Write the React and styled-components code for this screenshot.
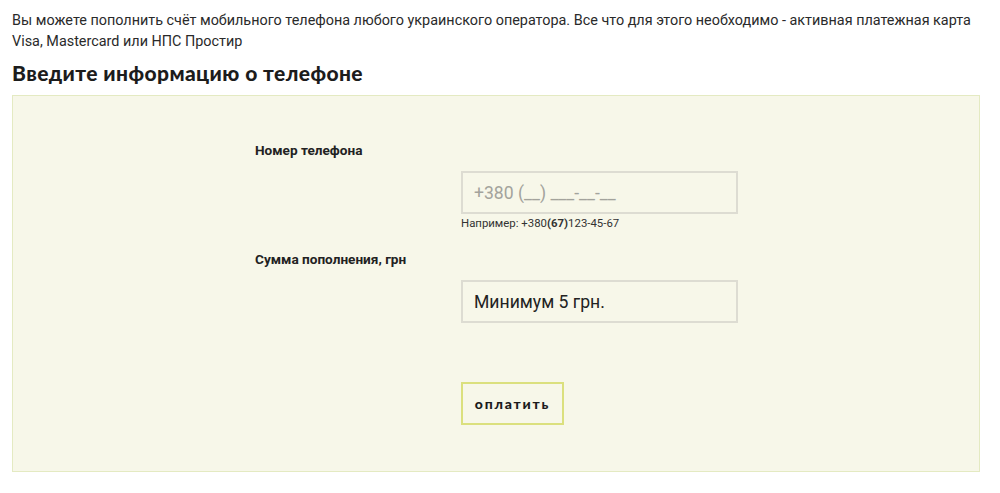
import React from 'react';
import styled, { createGlobalStyle } from 'styled-components';

const GlobalStyle = createGlobalStyle`
  body {
    margin: 0;
    background: #fff;
    font-family: Roboto, "Liberation Sans", sans-serif;
    color: #222;
  }
`;

const StyledWrapper = styled.div`
  padding: 10px 20px 0 12px;
`;

const StyledIntro = styled.p`
  margin: 0;
  font-size: 14.4px;
  line-height: 21px;
  color: #2a2a2a;
`;

const StyledHeading = styled.h2`
  margin: 9px 0 10px;
  font-family: Lato, sans-serif;
  font-weight: 900;
  font-size: 21px;
  letter-spacing: 0.4px;
  line-height: 24px;
  color: #1c1c1c;
`;

const StyledPanel = styled.form`
  box-sizing: border-box;
  width: 968px;
  height: 377px;
  background: #f7f7e9;
  border: 1px solid #e4eac2;
  padding: 44px 0 0 242px;
`;

const StyledField = styled.div`
  display: flex;
  flex-direction: column;
  margin-bottom: ${({ $gap }) => $gap || 0}px;
`;

const StyledLabel = styled.label`
  font-size: 13.6px;
  font-weight: 700;
  line-height: 20px;
  color: #222;
  margin-bottom: 11px;
`;

const StyledControl = styled.div`
  margin-left: 206px;
  display: flex;
  flex-direction: column;
`;

const StyledInput = styled.input`
  box-sizing: border-box;
  width: 277px;
  height: 43px;
  border: 2px solid #dddcd2;
  background: #f7f7e9;
  padding: 0 11px;
  font-family: Roboto, sans-serif;
  font-size: 17.6px;
  color: #222;
  outline: none;

  &::placeholder {
    color: ${({ $dark }) => ($dark ? '#222' : '#a3a39c')};
  }
`;

const StyledHint = styled.span`
  font-size: 11.4px;
  line-height: 16px;
  margin-top: 1px;
  color: #333;

  b {
    font-weight: 700;
  }
`;

const StyledButton = styled.button`
  box-sizing: border-box;
  margin: 59px 0 0 206px;
  width: 103px;
  height: 43px;
  padding: 0;
  background: transparent;
  border: 2px solid #dbe07e;
  font-family: Lato, sans-serif;
  font-weight: 900;
  font-size: 14px;
  letter-spacing: 1.8px;
  color: #1c1c1c;
  cursor: pointer;
`;

const App = () => (
  <>
    <GlobalStyle />
    <StyledWrapper>
      <StyledIntro>
        Вы можете пополнить счёт мобильного телефона любого украинского оператора. Все что для этого
        необходимо - активная платежная карта Visa, Mastercard или НПС Простир
      </StyledIntro>
      <StyledHeading>Введите информацию о телефоне</StyledHeading>
      <StyledPanel onSubmit={(e) => e.preventDefault()}>
        <StyledField $gap={18}>
          <StyledLabel htmlFor="phone">Номер телефона</StyledLabel>
          <StyledControl>
            <StyledInput id="phone" placeholder="+380 (__) ___-__-__" />
            <StyledHint>
              Например: +380<b>(67)</b>123-45-67
            </StyledHint>
          </StyledControl>
        </StyledField>
        <StyledField>
          <StyledLabel htmlFor="sum">Сумма пополнения, грн</StyledLabel>
          <StyledControl>
            <StyledInput id="sum" placeholder="Минимум 5 грн." $dark />
          </StyledControl>
        </StyledField>
        <StyledButton type="submit">оплатить</StyledButton>
      </StyledPanel>
    </StyledWrapper>
  </>
);

export default App;
